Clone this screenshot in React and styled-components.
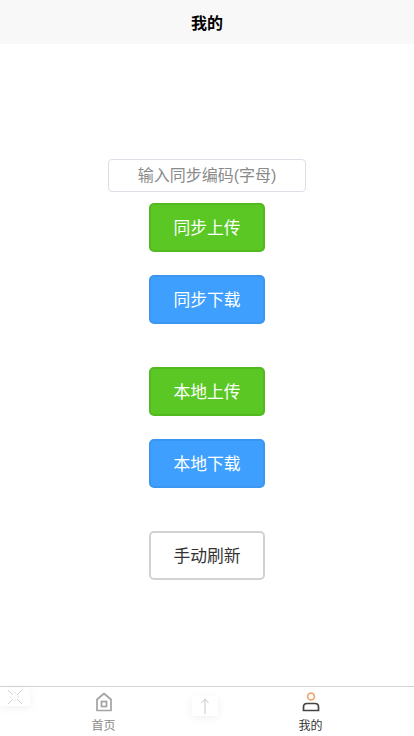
import React from "react";
import styled, { createGlobalStyle } from "styled-components";

const GlobalStyle = createGlobalStyle`
  html, body {
    margin: 0;
    padding: 0;
    background: #fff;
  }
  * {
    box-sizing: border-box;
  }
`;

const FONT = `"Liberation Sans", "Noto Sans CJK SC", sans-serif`;

const Page = styled.div`
  position: relative;
  width: 414px;
  height: 736px;
  display: flex;
  flex-direction: column;
  overflow: hidden;
  font-family: ${FONT};
`;

const Header = styled.header`
  height: 44px;
  flex-shrink: 0;
  background: #f8f8f8;
  display: flex;
  align-items: center;
  justify-content: center;
  padding-bottom: 1px;
  font-size: 16px;
  font-weight: 700;
  color: #000;
`;

const Main = styled.main`
  flex: 1;
  display: flex;
  flex-direction: column;
  align-items: center;
  padding-top: 115px;
`;

const CodeInput = styled.input`
  width: 198px;
  height: 33px;
  margin-bottom: 11px;
  border: 1px solid #dcdfe6;
  border-radius: 4px;
  outline: none;
  background: #fff;
  text-align: center;
  font-family: ${FONT};
  font-size: 16px;
  color: #606266;

  &::placeholder {
    color: #8a8a8a;
    opacity: 1;
  }
`;

const Group = styled.div`
  display: flex;
  flex-direction: column;
  gap: 23px;
  margin-bottom: 43px;
`;

const COLORS = {
  green: { bg: "#5ac725", border: "#52b91f", text: "#fff" },
  blue: { bg: "#3e9ffe", border: "#3a96f0", text: "#fff" },
  plain: { bg: "#fff", border: "#d2d2d2", text: "#333" },
};

const ActionButton = styled.button`
  width: 116px;
  height: 49px;
  padding: 0 0 2px;
  border: 2px solid ${({ $kind }) => COLORS[$kind].border};
  border-radius: 5px;
  background: ${({ $kind }) => COLORS[$kind].bg};
  color: ${({ $kind }) => COLORS[$kind].text};
  font-family: ${FONT};
  font-size: 16.8px;
  cursor: pointer;
`;

const TabBar = styled.nav`
  height: 50px;
  flex-shrink: 0;
  border-top: 1px solid #d4d4d4;
  background: #fff;
  display: grid;
  grid-template-columns: 207px 207px;
`;

const Tab = styled.a`
  display: flex;
  flex-direction: column;
  align-items: center;
  padding-top: 3px;
  font-size: 12px;
  line-height: 16px;
  color: ${({ $active }) => ($active ? "#333" : "#8a8a8a")};
`;

const TabIcon = styled.svg`
  display: block;
  width: 24px;
  height: 24px;
  margin-bottom: 4px;
`;

const FloatBox = styled.div`
  position: absolute;
  display: flex;
  align-items: center;
  justify-content: center;
  background: #fff;
  box-shadow: 0 2px 10px rgba(0, 0, 0, 0.06);
`;

const CloseBox = styled(FloatBox)`
  left: 0;
  top: 687px;
  width: 30px;
  height: 19px;
`;

const TopBox = styled(FloatBox)`
  left: 192px;
  top: 696px;
  width: 26px;
  height: 20px;
`;

const App = () => {
  return (
    <>
      <GlobalStyle />
      <Page>
        <Header>我的</Header>
        <Main>
          <CodeInput placeholder="输入同步编码(字母)" />
          <Group>
            <ActionButton $kind="green">同步上传</ActionButton>
            <ActionButton $kind="blue">同步下载</ActionButton>
          </Group>
          <Group>
            <ActionButton $kind="green">本地上传</ActionButton>
            <ActionButton $kind="blue">本地下载</ActionButton>
          </Group>
          <ActionButton $kind="plain">手动刷新</ActionButton>
        </Main>
        <TabBar>
          <Tab>
            <TabIcon viewBox="0 0 24 24" fill="none" stroke="#a3a3a3" strokeWidth="1.7">
              <path d="M5 9.5 12 3.5 19 9.5V20.5H5Z" strokeLinejoin="round" />
              <rect x="9.5" y="11.5" width="5" height="5" />
            </TabIcon>
            首页
          </Tab>
          <Tab $active>
            <TabIcon viewBox="0 0 24 24" fill="none" strokeWidth="1.7">
              <circle cx="12" cy="6.5" r="3.4" stroke="#f2a673" />
              <path d="M4.5 20.5V17C4.5 14.5 6 13.5 8 13.5H16C18 13.5 19.5 14.5 19.5 17V20.5Z" stroke="#444" />
            </TabIcon>
            我的
          </Tab>
        </TabBar>
        <CloseBox>
          <svg width="16" height="16" viewBox="0 0 16 16" fill="none" stroke="#cfcfcf" strokeWidth="1">
            <path d="M1 1 6 6M15 1 10 6M1 15 6 10M15 15 10 10" />
            <path d="M8 3V5M8 11V13M3 8H5M11 8H13" strokeDasharray="1 1" />
          </svg>
        </CloseBox>
        <TopBox>
          <svg width="10" height="16" viewBox="0 0 10 16" fill="none" stroke="#c8c8c8" strokeWidth="1">
            <path d="M5 16V1M1.5 5 5 1 8.5 5" />
          </svg>
        </TopBox>
      </Page>
    </>
  );
};

export default App;
